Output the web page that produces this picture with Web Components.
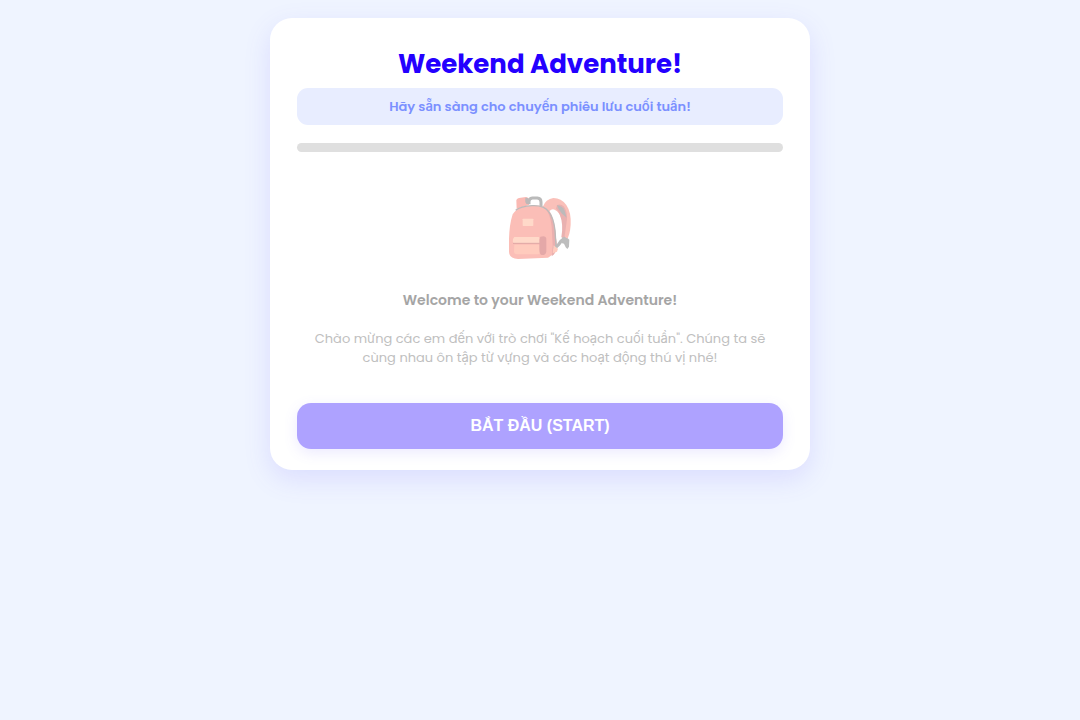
<!DOCTYPE html>
<html lang="vi">
<head>
<meta charset="utf-8">
<meta name="viewport" content="width=device-width, initial-scale=1">
<title>Weekend Adventure!</title>
<style>
  body { margin: 0; min-height: 100vh; background: #eff4ff; font-family: Poppins, Inter, "Noto Sans", sans-serif; }
</style>
</head>
<body>
<adventure-card>
  <span slot="title">Weekend Adventure!</span>
  <status-banner slot="status">Hãy sẵn sàng cho chuyến phiêu lưu cuối tuần!</status-banner>
  <progress-track slot="progress"></progress-track>
  <welcome-step>
    <backpack-icon slot="icon"></backpack-icon>
    <span slot="heading">Welcome to your Weekend Adventure!</span>
    <span slot="text">Chào mừng các em đến với trò chơi "Kế hoạch cuối tuần". Chúng ta sẽ cùng nhau ôn tập từ vựng và các hoạt động thú vị nhé!</span>
    <start-button slot="action">BẮT ĐẦU (START)</start-button>
  </welcome-step>
</adventure-card>
<script>
  const define = (name, markup) => {
    const template = document.createElement('template');
    template.innerHTML = markup;
    customElements.define(name, class extends HTMLElement {
      constructor() {
        super();
        this.attachShadow({ mode: 'open' }).append(template.content.cloneNode(true));
      }
    });
  };

  define('adventure-card', `
    <style>
      :host { display: block; padding: 18px; }
      main { box-sizing: border-box; max-width: 540px; margin: 0 auto; padding: 27px 27px 21px; border-radius: 22px; background: #fff; box-shadow: 0 9px 27px rgba(108, 92, 255, .15); }
      h1 { margin: 0 0 4px; font-size: 26px; line-height: 39px; font-weight: 700; text-align: center; color: #2400ff; }
    </style>
    <main>
      <h1><slot name="title"></slot></h1>
      <slot name="status"></slot>
      <slot name="progress"></slot>
      <slot></slot>
    </main>`);

  define('status-banner', `
    <style>
      :host { display: block; padding: 8px; border-radius: 11px; background: #e8edff; color: #7b90ff; font-size: 13px; line-height: 21px; font-weight: 600; text-align: center; }
    </style>
    <slot></slot>`);

  define('progress-track', `
    <style>
      :host { display: block; height: 9px; margin: 18px 0; border-radius: 5px; background: #dfdfdf; }
    </style>`);

  define('backpack-icon', `
    <style>
      :host { display: block; }
      svg { display: block; width: 64px; height: 65px; margin: 0 auto; }
    </style>
    <svg viewBox="40 33 192 195" role="img" aria-label="Backpack">
      <path d="M103 58V50Q103 40 113 39H128Q139 40 139 51V63" fill="none" stroke="#bababa" stroke-width="9"/>
      <path d="M66 72L65 46Q67 38 78 38L94 36Q102 37 103 44V60Z" fill="#fab9b3"/>
      <path d="M92 39Q90 51 95 57L103 58 104 44Q101 37 92 39Z" fill="#bdb8b8"/>
      <path d="M144 66Q153 42 176 39Q200 39 215 60Q230 82 228 119Q226 151 215 166L203 157Q208 128 202 105Q195 81 180 74Q169 70 160 84Z" fill="#fac0b9"/>
      <path d="M187 60Q198 55 207 64Q218 78 217 103L209 160 200 157Q207 119 196 91Q190 75 184 72Z" fill="#e9b1b0"/>
      <path d="M188 61Q202 62 210 77L216 98 202 86Q190 74 187 61Z" fill="#bcbaba"/>
      <path d="M60 80Q72 63 112 62Q150 59 163 76Q177 96 181 132L187 185Q180 207 160 218L70 222Q43 220 43 200V162Q44 119 54 88Z" fill="#fbbeb7"/>
      <path d="M148 67Q167 84 171 125L174 183 171 214Q182 207 187 188L181 132Q173 82 148 67Z" fill="#eab0af"/>
      <path d="M63 76Q78 64 112 62Q148 60 162 80Q177 99 181 136L184 182" fill="none" stroke="#bcbaba" stroke-width="4"/>
      <rect x="84" y="101" width="32" height="22" rx="2" fill="#ffd9c9"/>
      <path d="M59 179H137V201Q136 208 125 208H67Q58 208 58 199Z" fill="#ffcbbd"/>
      <path d="M59 156H132Q136 158 136 177L57 175Q53 171 55 162Z" fill="#ffd9c9"/>
      <path d="M55 175H136" fill="none" stroke="#dfa5a3" stroke-width="3"/>
      <path d="M137 155Q154 150 155 161V200Q153 211 141 210Q134 207 134 194V164Z" fill="#e4a8a8"/>
      <path d="M177 191Q193 181 199 168L213 158" fill="none" stroke="#bbb" stroke-width="9"/>
      <path d="M202 157L219 160 224 164 223 185 218 192 213 187 208 176 200 174Z" fill="#bdbdbd"/>
      <path d="M177 181L190 191 187 200 174 205Z" fill="#ffcbbd"/>
    </svg>`);

  define('welcome-step', `
    <style>
      :host { display: block; text-align: center; }
      .icon { padding: 26px 0 27px; }
      h2 { margin: 0 0 17px; font-size: 14px; line-height: 24px; font-weight: 600; color: #a5a5a5; }
      p { margin: 0 0 36px; padding: 0 9px; font-size: 13px; line-height: 19px; color: #c0c0c0; }
    </style>
    <div class="icon"><slot name="icon"></slot></div>
    <h2><slot name="heading"></slot></h2>
    <p><slot name="text"></slot></p>
    <slot name="action"></slot>`);

  define('start-button', `
    <style>
      :host { display: block; }
      button { display: block; width: 100%; padding: 14px; border: 0; border-radius: 14px; background: #aea2ff; color: #fff; font: 700 16px/18px "Liberation Sans", Arial, sans-serif; box-shadow: 0 4px 14px rgba(108, 92, 255, .13); cursor: pointer; }
    </style>
    <button type="button"><slot></slot></button>`);
</script>
</body>
</html>
